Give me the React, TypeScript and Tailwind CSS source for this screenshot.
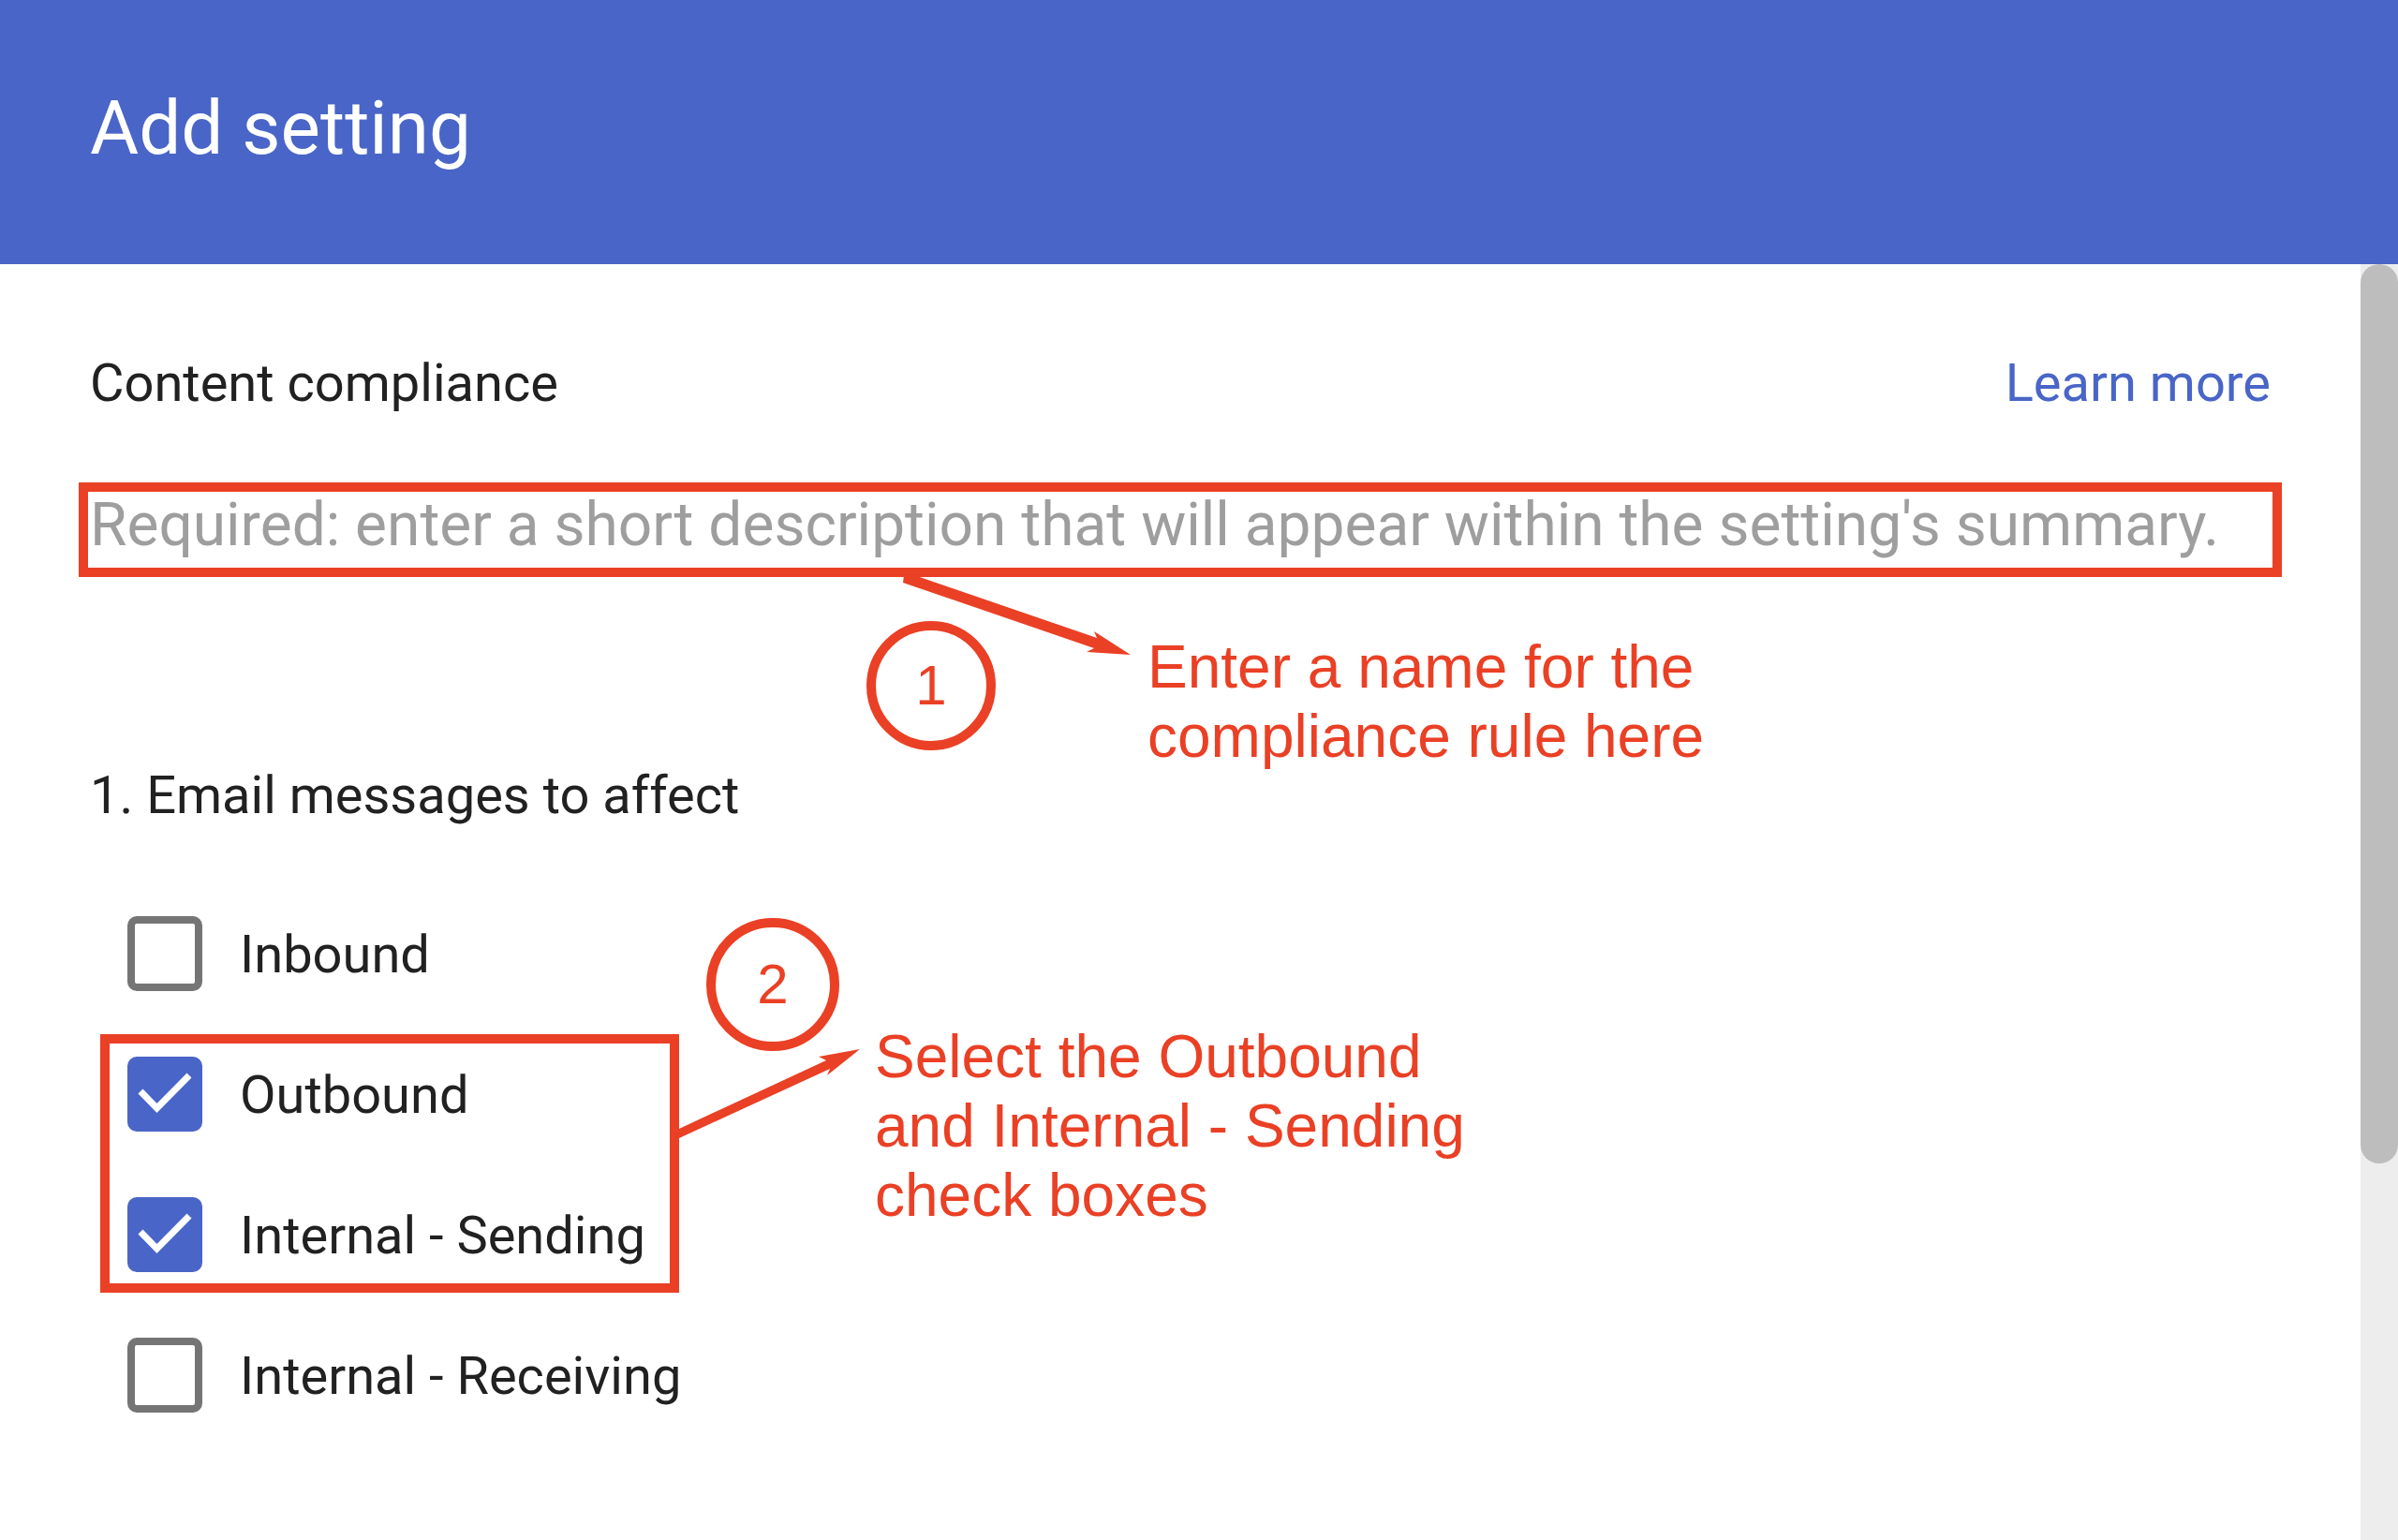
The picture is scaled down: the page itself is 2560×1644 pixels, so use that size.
import { useState } from "react";

type Option = { id: string; label: string; initial: boolean };

const INBOUND: Option = { id: "inbound", label: "Inbound", initial: false };
const OUTBOUND: Option = { id: "outbound", label: "Outbound", initial: true };
const SENDING: Option = { id: "internal-sending", label: "Internal - Sending", initial: true };
const RECEIVING: Option = { id: "internal-receiving", label: "Internal - Receiving", initial: false };

function CheckRow({ option }: { option: Option }) {
  const [checked, setChecked] = useState(option.initial);
  return (
    <div className="flex items-center gap-10">
      <span className="relative block size-20 shrink-0">
        <input
          id={option.id}
          type="checkbox"
          checked={checked}
          onChange={(e) => setChecked(e.target.checked)}
          className="block size-20 appearance-none rounded-[10px] border-8 border-[#757575] bg-white checked:border-[#4965c7] checked:bg-[#4965c7]"
        />
        {checked && (
          <svg viewBox="0 0 80 80" className="pointer-events-none absolute inset-0 size-20" aria-hidden="true">
            <path d="M14 37 L31.5 55 L66 20" fill="none" stroke="#fff" strokeWidth="7" />
          </svg>
        )}
      </span>
      <label htmlFor={option.id} className="pt-0.5 text-[56px] leading-[64px]">
        {option.label}
      </label>
    </div>
  );
}

export default function App() {
  return (
    <div className="flex min-h-screen flex-col bg-white font-['Roboto',sans-serif] text-[#212121]">
      <header className="bg-[#4965c7] px-24 pt-[89px] pb-[97px] text-white">
        <h1 className="text-[80px] leading-[96px]">Add setting</h1>
      </header>

      <div className="flex grow">
        <main className="min-w-0 grow px-24 pt-[95px]">
          <div className="flex items-center justify-between text-[56px] leading-[64px]">
            <h2>Content compliance</h2>
            <a href="#learn-more" className="text-[#4965c7]">
              Learn more
            </a>
          </div>

          <div className="relative -mx-3 mt-[74px]">
            <input
              type="text"
              aria-label="Short description"
              placeholder="Required: enter a short description that will appear within the setting's summary."
              className="block h-[101px] w-full border-10 border-[#ea4025] bg-white pr-2 pb-2.5 pl-0.5 text-[64px] outline-none placeholder:text-[#9e9e9e] placeholder:opacity-100"
            />
            <svg
              viewBox="0 0 246 88"
              className="pointer-events-none absolute top-[97px] left-[878px] h-[88px] w-[246px]"
              aria-hidden="true"
            >
              <path d="M3 2 L14 2 L209 69 L206 62 L245 87 L198 84 L206 80 L2 10 Z" fill="#ea4025" />
            </svg>
            <div className="absolute top-[148px] left-[841px] flex size-[138px] items-center justify-center rounded-full border-10 border-[#ea4025] font-['Liberation_Sans',sans-serif] text-[60px] leading-none text-[#ea4025]">
              1
            </div>
            <p className="absolute top-[160px] left-[1141px] font-['Liberation_Sans',sans-serif] text-[64px] leading-[74px] whitespace-nowrap text-[#ea4025]">
              Enter a name for the
              <br />
              compliance rule here
            </p>
          </div>

          <fieldset className="mt-[201px]">
            <legend className="text-[56px] leading-[64px]">1. Email messages to affect</legend>
            <div className="mt-[97px] flex flex-col items-start pl-10">
              <CheckRow option={INBOUND} />
              <div className="relative mt-[46px] -ml-[29px] flex flex-col gap-[70px] border-10 border-[#ea4025] pt-3.5 pr-[26px] pb-3 pl-[19px]">
                <CheckRow option={OUTBOUND} />
                <CheckRow option={SENDING} />
                <svg
                  viewBox="0 0 194 96"
                  className="pointer-events-none absolute top-[91px] left-full h-[96px] w-[194px] -translate-y-[85px] translate-x-2.5"
                  aria-hidden="true"
                >
                  <path d="M0 85 L157 12 L149 8 L193 0 L158 28 L161 21 L0 95 Z" fill="#ea4025" />
                </svg>
                <div className="absolute -top-[134px] left-[637px] flex size-[142px] items-center justify-center rounded-full border-10 border-[#ea4025] font-['Liberation_Sans',sans-serif] text-[60px] leading-none text-[#ea4025]">
                  2
                </div>
                <p className="absolute -top-[23px] left-[817px] font-['Liberation_Sans',sans-serif] text-[64px] leading-[74px] whitespace-nowrap text-[#ea4025]">
                  Select the Outbound
                  <br />
                  and Internal - Sending
                  <br />
                  check boxes
                </p>
              </div>
              <div className="mt-12">
                <CheckRow option={RECEIVING} />
              </div>
            </div>
          </fieldset>
        </main>

        <div className="grid w-10 shrink-0 grid-rows-[960fr_402fr] bg-[#ededed]" aria-hidden="true">
          <div className="rounded-full bg-[#bdbdbd]" />
        </div>
      </div>
    </div>
  );
}
